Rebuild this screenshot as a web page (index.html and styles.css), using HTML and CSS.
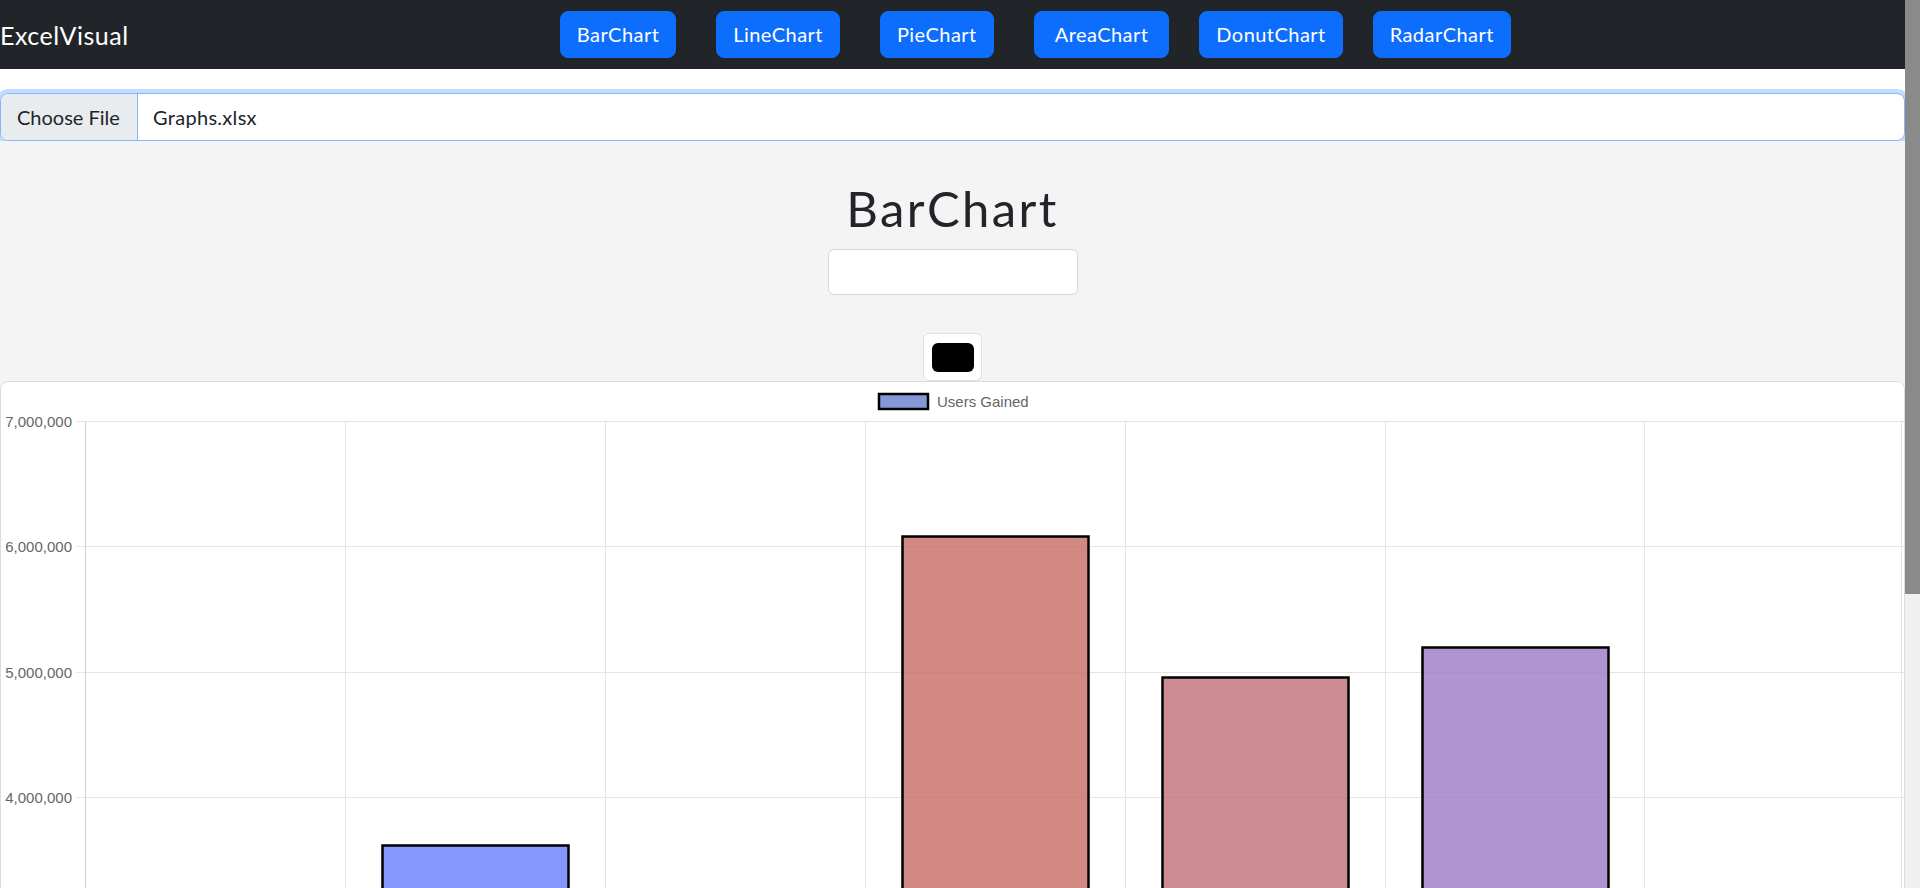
FILE: index.html
```html
<!DOCTYPE html>
<html lang="en">
<head>
<meta charset="utf-8">
<title>ExcelVisual</title>
<link rel="stylesheet" href="styles.css">
</head>
<body>
<nav class="topbar">
  <a class="brand" href="#">ExcelVisual</a>
  <div class="chart-nav">
    <button class="nav-btn">BarChart</button>
    <button class="nav-btn">LineChart</button>
    <button class="nav-btn">PieChart</button>
    <button class="nav-btn nav-btn-wide">AreaChart</button>
    <button class="nav-btn nav-btn-tight">DonutChart</button>
    <button class="nav-btn nav-btn-tight">RadarChart</button>
  </div>
</nav>

<div class="upload">
  <div class="file-field">
    <span class="file-btn">Choose File</span>
    <span class="file-name">Graphs.xlsx</span>
  </div>
</div>

<main class="workspace">
  <h1 class="chart-title">BarChart</h1>
  <input class="title-input" type="text" aria-label="Chart title">
  <div class="color-field"><span class="color-swatch"></span></div>

  <section class="chart-card">
    <svg class="chart" width="1903" height="946" viewBox="0 0 1903 946">
      <g class="grid">
        <line x1="75" y1="39.5" x2="1903" y2="39.5"/>
        <line x1="75" y1="164.5" x2="1903" y2="164.5"/>
        <line x1="75" y1="290.5" x2="1903" y2="290.5"/>
        <line x1="75" y1="415.5" x2="1903" y2="415.5"/>
        <line x1="75" y1="540.5" x2="1903" y2="540.5"/>
        <line x1="75" y1="666.5" x2="1903" y2="666.5"/>
        <line x1="75" y1="791.5" x2="1903" y2="791.5"/>
        <line x1="344.5" y1="39" x2="344.5" y2="926"/>
        <line x1="604.5" y1="39" x2="604.5" y2="926"/>
        <line x1="864.5" y1="39" x2="864.5" y2="926"/>
        <line x1="1124.5" y1="39" x2="1124.5" y2="926"/>
        <line x1="1384.5" y1="39" x2="1384.5" y2="926"/>
        <line x1="1643.5" y1="39" x2="1643.5" y2="926"/>
        <line x1="1900.5" y1="39" x2="1900.5" y2="926"/>
      </g>
      <g class="axis">
        <line x1="84.5" y1="39" x2="84.5" y2="926"/>
        <line x1="75" y1="916.5" x2="1903" y2="916.5"/>
      </g>
      <g class="ticks">
        <text x="71" y="45">7,000,000</text>
        <text x="71" y="170">6,000,000</text>
        <text x="71" y="296">5,000,000</text>
        <text x="71" y="421">4,000,000</text>
        <text x="71" y="546">3,000,000</text>
        <text x="71" y="672">2,000,000</text>
        <text x="71" y="797">1,000,000</text>
        <text x="71" y="922">0</text>
      </g>
      <g class="bars">
        <rect x="121.5" y="615" width="186" height="301" fill="rgba(101,125,204,0.8)"/>
        <rect x="381.5" y="463.5" width="186" height="452.5" fill="rgba(103,124,255,0.8)"/>
        <rect x="641.5" y="540" width="186" height="376" fill="rgba(120,190,150,0.8)"/>
        <rect x="901.5" y="154.5" width="186" height="761.5" fill="rgba(200,108,100,0.8)"/>
        <rect x="1161.5" y="295.5" width="186" height="620.5" fill="rgba(192,111,119,0.8)"/>
        <rect x="1421.5" y="265.5" width="186" height="650.5" fill="rgba(156,120,196,0.8)"/>
        <rect x="1681.5" y="690" width="186" height="226" fill="rgba(230,180,90,0.8)"/>
      </g>
      <g class="legend">
        <rect x="878" y="12" width="49" height="15" fill="rgb(132,151,214)"/>
        <text x="936" y="25">Users Gained</text>
      </g>
    </svg>
  </section>
</main>

<div class="scrollbar" aria-hidden="true"><div class="scrollbar-thumb"></div></div>
</body>
</html>
```

FILE: styles.css
```css
body {
  margin: 0 15px 0 0;
  font-family: Lato, "Noto Sans", "Liberation Sans", sans-serif;
  color: #212529;
  background: #ffffff;
}

.scrollbar {
  position: fixed;
  top: 0;
  right: 0;
  bottom: 0;
  width: 15px;
  background: #f0f0f0;
}

.scrollbar-thumb {
  height: 594px;
  background: #8a8a8a;
}

.topbar {
  display: flex;
  align-items: center;
  height: 69px;
  background: #212529;
}

.brand {
  color: #ffffff;
  font-size: 25px;
  letter-spacing: 0.5px;
  text-decoration: none;
  margin-right: 16px;
  white-space: nowrap;
}

.chart-nav {
  flex: 1;
  display: flex;
  justify-content: center;
  gap: 40px;
  padding-left: 21px;
}

.nav-btn {
  font-family: inherit;
  font-size: 20px;
  letter-spacing: 0.45px;
  line-height: 29px;
  color: #ffffff;
  background: #0d6efd;
  border: 1px solid #0d6efd;
  border-radius: 8px;
  padding: 8px 16px;
}

.nav-btn-wide {
  padding: 8px 20px;
}

.nav-btn-tight {
  margin-left: -10px;
}

.upload {
  padding-top: 24px;
}

.file-field {
  display: flex;
  align-items: stretch;
  height: 48px;
  box-sizing: border-box;
  border: 1px solid #86b7fe;
  border-radius: 8px;
  box-shadow: 0 0 0 4px rgba(13, 110, 253, 0.25);
  background: #ffffff;
  font-size: 20px;
  overflow: hidden;
}

.file-btn {
  display: flex;
  align-items: center;
  padding: 0 16px;
  width: 137px;
  box-sizing: border-box;
  background: #e9ecef;
  border-right: 1px solid #86b7fe;
  white-space: nowrap;
}

.file-name {
  display: flex;
  align-items: center;
  padding-left: 15px;
  letter-spacing: 0.3px;
}

.workspace {
  background: #f4f4f4;
  display: flex;
  flex-direction: column;
  align-items: center;
  padding-top: 38px;
}

.chart-title {
  margin: 0;
  font-weight: 400;
  font-size: 49px;
  letter-spacing: 2.4px;
  line-height: 58px;
  color: #212529;
}

.title-input {
  margin-top: 12px;
  width: 250px;
  height: 46px;
  box-sizing: border-box;
  border: 1px solid #d3d6da;
  border-radius: 6px;
  background: #ffffff;
}

.color-field {
  margin-top: 38px;
  width: 59px;
  height: 48px;
  box-sizing: border-box;
  border: 1px solid #dcdfe3;
  border-radius: 6px;
  background: #ffffff;
  display: flex;
  align-items: center;
  justify-content: center;
}

.color-swatch {
  width: 42px;
  height: 29px;
  border-radius: 6px;
  background: #000000;
}

.chart-card {
  align-self: stretch;
  background: #ffffff;
  border: 1px solid #dcdcdc;
  border-radius: 8px;
  overflow: hidden;
}

.chart {
  display: block;
}

.grid line {
  stroke: #e5e5e5;
  stroke-width: 1;
}

.axis line {
  stroke: #cfcfcf;
  stroke-width: 1;
}

.ticks text {
  font-family: "Liberation Sans", Arial, sans-serif;
  font-size: 15px;
  fill: #666666;
  text-anchor: end;
}

.bars rect {
  stroke: #000000;
  stroke-width: 2.5;
}

.legend rect {
  stroke: #000000;
  stroke-width: 2.5;
}

.legend text {
  font-family: "Liberation Sans", Arial, sans-serif;
  font-size: 15px;
  fill: #666666;
}
```
